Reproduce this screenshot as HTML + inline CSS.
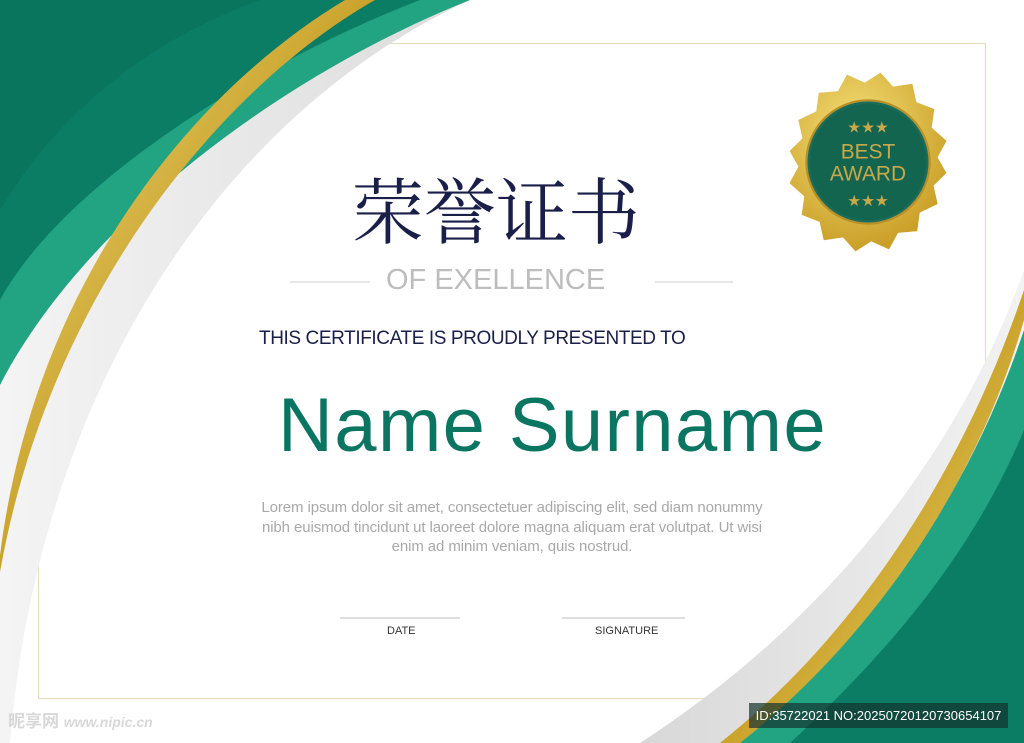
<!DOCTYPE html>
<html><head><meta charset="utf-8"><style>
body{margin:0;width:1024px;height:743px;overflow:hidden;background:#fff;position:relative;font-family:"Liberation Sans",sans-serif}
.a{position:absolute;white-space:nowrap}
</style></head><body>
<svg width="1024" height="743" style="position:absolute;left:0;top:0">
<defs>
<linearGradient id="g" x1="0" y1="0" x2="1" y2="1"><stop offset="0" stop-color="#f3e08a"/><stop offset=".5" stop-color="#c9a22a"/><stop offset="1" stop-color="#f2dc7d"/></linearGradient>
<linearGradient id="gr" x1="0" y1="0" x2="1" y2="0"><stop offset="0" stop-color="#d8d8d8"/><stop offset="1" stop-color="#f2f2f2"/></linearGradient>
<linearGradient id="gl" x1="0" y1="0" x2="1" y2="0"><stop offset="0" stop-color="#f4f4f4"/><stop offset="1" stop-color="#dcdcdc"/></linearGradient>
<radialGradient id="bd" cx=".4" cy=".35" r=".7"><stop offset="0" stop-color="#f6e27a"/><stop offset="1" stop-color="#c79a22"/></radialGradient>
</defs>
<rect x="38.5" y="43.5" width="947" height="655" fill="none" stroke="#e6dcc0" stroke-width="1.2"/>
<!-- top-left -->
<path d="M0,0 L470,0 C230,110 40,380 10,743 L0,743 Z" fill="url(#gl)"/>
<path d="M0,0 L470,0 C270,80 80,230 0,385 Z" fill="#22a382"/>
<path d="M0,0 L420,0 C240,70 60,190 0,300 Z" fill="#0b7d65"/>
<path d="M0,0 L260,0 C150,40 60,110 0,210 Z" fill="#0a7058" opacity=".6"/>
<path d="M345,0 C195,90 35,280 0,555 L0,572 C50,290 225,85 375,0 Z" fill="url(#g)"/>
<!-- bottom-right -->
<path d="M1024,270 C960,450 830,620 640,743 L1024,743 Z" fill="url(#gr)"/>
<path d="M1024,330 C960,520 860,640 730,743 L1024,743 Z" fill="#22a382"/>
<path d="M1024,430 C970,560 880,660 790,743 L1024,743 Z" fill="#0b7d65"/>
<path d="M1024,290 C960,480 850,640 720,743 L740,743 C870,640 975,490 1024,320 Z" fill="url(#g)"/>
<!-- lines -->
<line x1="290" y1="282" x2="370" y2="282" stroke="#ccc"/>
<line x1="655" y1="282" x2="733" y2="282" stroke="#ccc"/>
<line x1="340" y1="618" x2="460" y2="618" stroke="#bbb"/>
<line x1="562" y1="618" x2="685" y2="618" stroke="#bbb"/>
<!-- badge -->
<g transform="translate(868,162) scale(1.1)">
<path d="M0,-82 L13,-71 30,-76 36,-60 53,-56 53,-39 68,-29 62,-13 72,0 62,13 68,29 53,39 53,56 36,60 30,76 13,71 0,82 -13,71 -30,76 -36,60 -53,56 -53,39 -68,29 -62,13 -72,0 -62,-13 -68,-29 -53,-39 -53,-56 -36,-60 -30,-76 -13,-71Z" fill="url(#bd)" transform="rotate(8)"/>
<circle r="56" fill="#1a6d5a" stroke="#b8902a" stroke-width="2"/>
<circle r="53" fill="#136550"/>
<text x="0" y="-3" text-anchor="middle" font-family="Liberation Sans" font-size="19" fill="#c9a84a">BEST</text>
<text x="0" y="17" text-anchor="middle" font-family="Liberation Sans" font-size="19" fill="#c9a84a">AWARD</text>
<text x="0" y="-27" text-anchor="middle" font-size="14" fill="#c9a84a">★★★</text>
<text x="0" y="40" text-anchor="middle" font-size="14" fill="#c9a84a">★★★</text>
</g>
</svg>
<div class="a" style="left:352px;top:155px;font:72px 'Noto Serif CJK SC',serif;color:#1a1f4a">荣誉证书</div>
<div class="a" style="left:386px;top:264px;font-size:29px;color:#bdbdbd">OF EXELLENCE</div>
<div class="a" style="left:259px;top:328px;font-size:19px;color:#1a1f4a;letter-spacing:-0.4px">THIS CERTIFICATE IS PROUDLY PRESENTED TO</div>
<div class="a" style="left:278px;top:382px;font-size:76px;color:#0a7560;letter-spacing:1.4px">Name Surname</div>
<div class="a" style="left:0;width:1024px;top:498px;text-align:center;font-size:15px;line-height:19.5px;color:#a8a8a8;letter-spacing:-0.1px">Lorem ipsum dolor sit amet, consectetuer adipiscing elit, sed diam nonummy<br>nibh euismod tincidunt ut laoreet dolore magna aliquam erat volutpat. Ut wisi<br>enim ad minim veniam, quis nostrud.</div>
<div class="a" style="left:387px;top:625px;font-size:11px;color:#333">DATE</div>
<div class="a" style="left:595px;top:625px;font-size:11px;color:#333">SIGNATURE</div>
<div class="a" style="left:8px;top:707px;font:bold 17px 'Liberation Sans','Noto Sans CJK SC',sans-serif;color:rgba(200,200,200,.7)">昵享网 <i style="font-size:14px">www.nipic.cn</i></div>
<div class="a" style="left:749px;top:703px;width:259px;height:25px;background:rgba(20,50,45,.7);color:#fff;font-size:13px;line-height:25px;text-align:center">ID:35722021 NO:20250720120730654107</div>
</body></html>
